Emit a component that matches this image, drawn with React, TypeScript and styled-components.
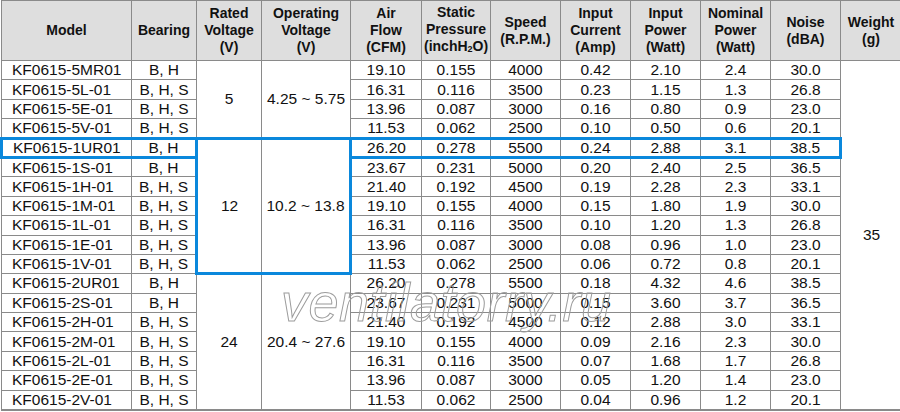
import React from "react";
import styled, { createGlobalStyle } from "styled-components";

const Global = createGlobalStyle`
  html, body { margin: 0; padding: 0; background: #ffffff; }
  body { font-family: "Liberation Sans", Arial, sans-serif; color: #111; }
`;

const BLUE = "#0a88dc";
const GRID = "#8a8a8a";

const Sheet = styled.div`
  position: relative;
  width: 900px;
  height: 412px;
  overflow: hidden;
`;

const Table = styled.table`
  width: 900px;
  table-layout: fixed;
  border-collapse: collapse;
  border-top: 1px solid ${GRID};
  border-left: 1px solid ${GRID};
  border-right: 1px solid ${GRID};
  border-bottom: 2px solid ${GRID};
`;

const Col = styled.col<{ $w: number }>`
  width: ${(p) => p.$w}px;
`;

const HeadRow = styled.tr`
  height: 60px;
  background: #dedede;
`;

const HeadCell = styled.th`
  border: 1px solid ${GRID};
  padding: 0 2px;
  font-size: 14px;
  font-weight: bold;
  line-height: 17px;
  text-align: center;
  vertical-align: middle;
  color: #111;
`;

const Sub = styled.span`
  font-size: 9px;
  vertical-align: -1px;
`;

const BodyRow = styled.tr`
  height: 19.4px;
`;

type Edges = { $t?: boolean; $b?: boolean; $l?: boolean; $r?: boolean; $left?: boolean };

const Cell = styled.td<Edges>`
  border: 1px solid ${GRID};
  ${(p) => (p.$t ? `border-top: 3px solid ${BLUE};` : "")}
  ${(p) => (p.$b ? `border-bottom: 3px solid ${BLUE};` : "")}
  ${(p) => (p.$l ? `border-left: 3px solid ${BLUE};` : "")}
  ${(p) => (p.$r ? `border-right: 3px solid ${BLUE};` : "")}
  padding: 0 ${(p) => (p.$left ? "0 0 10px" : "0")};
  padding-left: ${(p) => (p.$left ? "10px" : "0")};
  font-size: 15.5px;
  line-height: 16px;
  text-align: ${(p) => (p.$left ? "left" : "center")};
  vertical-align: middle;
  white-space: nowrap;
  background: #ffffff;
  color: #111;
`;

const Watermark = styled.div`
  position: absolute;
  left: 281px;
  top: 275px;
  font-family: "Liberation Sans", Arial, sans-serif;
  font-style: italic;
  font-size: 54px;
  line-height: 54px;
  color: transparent;
  -webkit-text-stroke: 1px #9c9c9c;
  letter-spacing: 0.5px;
  pointer-events: none;
  white-space: nowrap;
`;

const widths = [130, 65, 65, 89, 71, 69, 70, 70, 70, 70, 70, 61];

type Row = [string, string, string, string, string, string, string, string, string];

const groups: { rated: string; op: string; rows: Row[] }[] = [
  {
    rated: "5",
    op: "4.25 ~ 5.75",
    rows: [
      ["KF0615-5MR01", "B, H", "19.10", "0.155", "4000", "0.42", "2.10", "2.4", "30.0"],
      ["KF0615-5L-01", "B, H, S", "16.31", "0.116", "3500", "0.23", "1.15", "1.3", "26.8"],
      ["KF0615-5E-01", "B, H, S", "13.96", "0.087", "3000", "0.16", "0.80", "0.9", "23.0"],
      ["KF0615-5V-01", "B, H, S", "11.53", "0.062", "2500", "0.10", "0.50", "0.6", "20.1"],
    ],
  },
  {
    rated: "12",
    op: "10.2 ~ 13.8",
    rows: [
      ["KF0615-1UR01", "B, H", "26.20", "0.278", "5500", "0.24", "2.88", "3.1", "38.5"],
      ["KF0615-1S-01", "B, H", "23.67", "0.231", "5000", "0.20", "2.40", "2.5", "36.5"],
      ["KF0615-1H-01", "B, H, S", "21.40", "0.192", "4500", "0.19", "2.28", "2.3", "33.1"],
      ["KF0615-1M-01", "B, H, S", "19.10", "0.155", "4000", "0.15", "1.80", "1.9", "30.0"],
      ["KF0615-1L-01", "B, H, S", "16.31", "0.116", "3500", "0.10", "1.20", "1.3", "26.8"],
      ["KF0615-1E-01", "B, H, S", "13.96", "0.087", "3000", "0.08", "0.96", "1.0", "23.0"],
      ["KF0615-1V-01", "B, H, S", "11.53", "0.062", "2500", "0.06", "0.72", "0.8", "20.1"],
    ],
  },
  {
    rated: "24",
    op: "20.4 ~ 27.6",
    rows: [
      ["KF0615-2UR01", "B, H", "26.20", "0.278", "5500", "0.18", "4.32", "4.6", "38.5"],
      ["KF0615-2S-01", "B, H", "23.67", "0.231", "5000", "0.15", "3.60", "3.7", "36.5"],
      ["KF0615-2H-01", "B, H, S", "21.40", "0.192", "4500", "0.12", "2.88", "3.0", "33.1"],
      ["KF0615-2M-01", "B, H, S", "19.10", "0.155", "4000", "0.09", "2.16", "2.3", "30.0"],
      ["KF0615-2L-01", "B, H, S", "16.31", "0.116", "3500", "0.07", "1.68", "1.7", "26.8"],
      ["KF0615-2E-01", "B, H, S", "13.96", "0.087", "3000", "0.05", "1.20", "1.4", "23.0"],
      ["KF0615-2V-01", "B, H, S", "11.53", "0.062", "2500", "0.04", "0.96", "1.2", "20.1"],
    ],
  },
];

const totalRows = groups.reduce((n, g) => n + g.rows.length, 0);

export default function App() {
  return (
    <>
      <Global />
      <Sheet>
        <Table>
          <colgroup>
            {widths.map((w, i) => (
              <Col key={i} $w={w} />
            ))}
          </colgroup>
          <thead>
            <HeadRow>
              <HeadCell>Model</HeadCell>
              <HeadCell>Bearing</HeadCell>
              <HeadCell>Rated<br />Voltage<br />(V)</HeadCell>
              <HeadCell>Operating<br />Voltage<br />(V)</HeadCell>
              <HeadCell>Air<br />Flow<br />(CFM)</HeadCell>
              <HeadCell>Static<br />Pressure<br />(inchH<Sub>2</Sub>O)</HeadCell>
              <HeadCell>Speed<br />(R.P.M.)</HeadCell>
              <HeadCell>Input<br />Current<br />(Amp)</HeadCell>
              <HeadCell>Input<br />Power<br />(Watt)</HeadCell>
              <HeadCell>Nominal<br />Power<br />(Watt)</HeadCell>
              <HeadCell>Noise<br />(dBA)</HeadCell>
              <HeadCell>Weight<br />(g)</HeadCell>
            </HeadRow>
          </thead>
          <tbody>
            {groups.map((g, gi) =>
              g.rows.map((r, ri) => {
                const hl = gi === 1 && ri === 0;
                const grp = gi === 1;
                return (
                  <BodyRow key={r[0]}>
                    <Cell $left $t={hl} $b={hl} $l={hl}>{r[0]}</Cell>
                    <Cell $t={hl} $b={hl} $r={grp}>{r[1]}</Cell>
                    {ri === 0 && (
                      <>
                        <Cell rowSpan={g.rows.length} $t={grp} $b={grp} $l={grp}>
                          {g.rated}
                        </Cell>
                        <Cell rowSpan={g.rows.length} $t={grp} $b={grp} $r={grp}>
                          {g.op}
                        </Cell>
                      </>
                    )}
                    <Cell $t={hl} $b={hl} $l={grp}>{r[2]}</Cell>
                    <Cell $t={hl} $b={hl}>{r[3]}</Cell>
                    <Cell $t={hl} $b={hl}>{r[4]}</Cell>
                    <Cell $t={hl} $b={hl}>{r[5]}</Cell>
                    <Cell $t={hl} $b={hl}>{r[6]}</Cell>
                    <Cell $t={hl} $b={hl}>{r[7]}</Cell>
                    <Cell $t={hl} $b={hl} $r={hl}>{r[8]}</Cell>
                    {gi === 0 && ri === 0 && <Cell rowSpan={totalRows}>35</Cell>}
                  </BodyRow>
                );
              })
            )}
          </tbody>
        </Table>
        <Watermark>ventilatorry.ru</Watermark>
      </Sheet>
    </>
  );
}
